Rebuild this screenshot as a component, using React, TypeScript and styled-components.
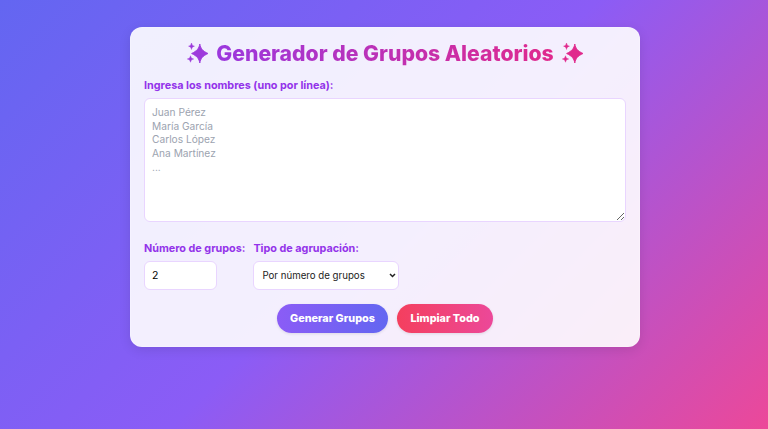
import styled, { createGlobalStyle } from "styled-components";

const GlobalStyle = createGlobalStyle`
    html, body {
        margin: 0;
        padding: 0;
    }

    body {
        font-family: "Inter", "Liberation Sans", sans-serif;
    }

    * {
        box-sizing: border-box;
    }
`;

const Sparkle = (props: { color: string }) => (
    <SparkleIcon viewBox="0 0 21 20" fill={props.color}>
        <path d="M12.8 1 C13.6 5.4 15.6 8 21 10.5 C15.6 13 13.6 15.6 12.8 20 C12 15.6 10 13 4.6 10.5 C10 8 12 5.4 12.8 1 Z" stroke={props.color} strokeWidth="0.9" strokeLinejoin="round" />
        <path d="M4.5 0 C4.9 2 5.5 2.7 7.4 3.2 C5.5 3.7 4.9 4.4 4.5 6.4 C4.1 4.4 3.5 3.7 1.6 3.2 C3.5 2.7 4.1 2 4.5 0 Z" stroke={props.color} strokeWidth="0.5" strokeLinejoin="round" />
        <path d="M3.5 12.8 C3.9 14.8 4.5 15.5 6.6 16 C4.5 16.5 3.9 17.2 3.5 19.2 C3.1 17.2 2.5 16.5 0.4 16 C2.5 15.5 3.1 14.8 3.5 12.8 Z" stroke={props.color} strokeWidth="0.5" strokeLinejoin="round" />
    </SparkleIcon>
);

export default function App() {
    return <Page>
        <GlobalStyle />
        <Card>
            <TitleRow>
                <Sparkle color="#9d3bdc" />
                <Title>Generador de Grupos Aleatorios</Title>
                <Sparkle color="#e0298c" />
            </TitleRow>
            <Field>
                <Label>Ingresa los nombres (uno por línea):</Label>
                <NamesArea placeholder={"Juan Pérez\nMaría García\nCarlos López\nAna Martínez\n..."} />
            </Field>
            <OptionsRow>
                <Field>
                    <Label>Número de grupos:</Label>
                    <NumberInput type="number" defaultValue={2} />
                </Field>
                <Field>
                    <Label>Tipo de agrupación:</Label>
                    <TypeSelect defaultValue="groups">
                        <option value="groups">Por número de grupos</option>
                        <option value="size">Por tamaño de grupo</option>
                    </TypeSelect>
                </Field>
            </OptionsRow>
            <ButtonsRow>
                <ActionButton $from="#8b5cf6" $to="#6366f1" $width={111}>Generar Grupos</ActionButton>
                <ActionButton $from="#f43f5e" $to="#ec4899" $width={96}>Limpiar Todo</ActionButton>
            </ButtonsRow>
        </Card>
    </Page>;
}

const Page = styled.div`
    width: 100%;
    height: 429px;
    overflow: hidden;

    display: flex;
    justify-content: center;
    align-items: flex-start;

    padding: 27px 0 0 2px;

    background: linear-gradient(135deg, #6366f1 0%, #8b5cf6 50%, #ec4899 100%);
`;

const Card = styled.div`
    width: 510px;
    height: 320px;

    display: flex;
    flex-direction: column;

    padding: 12px 13px 13px;

    border: 1px solid rgba(255, 255, 255, 0.2);
    border-radius: 12px;

    background: rgba(255, 255, 255, 0.9);
    box-shadow: 0 3px 12px rgba(0, 0, 0, 0.1);
`;

const TitleRow = styled.div`
    height: 25px;

    display: flex;
    justify-content: center;
    align-items: center;
    gap: 8px;

    margin-bottom: 14px;
`;

const SparkleIcon = styled.svg`
    width: 21px;
    height: 20px;
    flex-shrink: 0;
`;

const Title = styled.h1`
    margin: 0;

    font-size: 21.2px;
    font-weight: 800;
    white-space: nowrap;

    color: transparent;
    background: linear-gradient(90deg, #9b38de 0%, #e0298c 100%);
    background-clip: text;
    -webkit-background-clip: text;
`;

const Field = styled.div`
    display: flex;
    flex-direction: column;
`;

const Label = styled.label`
    height: 14px;
    margin-bottom: 5px;

    font-size: 10.8px;
    line-height: 14px;
    font-weight: 700;
    white-space: nowrap;

    color: #9333ea;
`;

const NamesArea = styled.textarea`
    width: 482px;
    height: 124px;

    padding: 7px;

    border: 1px solid #e9d5ff;
    border-radius: 6px;

    font-family: "Inter", "Liberation Sans", sans-serif;
    font-size: 10.2px;
    line-height: 13.7px;

    background: #ffffff;

    &::placeholder {
        color: #9ca3af;
        opacity: 1;
    }
`;

const OptionsRow = styled.div`
    display: flex;
    gap: 8px;

    margin-top: 20px;
`;

const NumberInput = styled.input`
    width: 73px;
    height: 29px;

    padding: 0 7px;

    border: 1px solid #e9d5ff;
    border-radius: 6px;

    font-family: "Inter", "Liberation Sans", sans-serif;
    font-size: 10.5px;

    background: #ffffff;
`;

const TypeSelect = styled.select`
    width: 146px;
    height: 29px;

    appearance: none;
    padding: 0 8px;

    border: 1px solid #e9d5ff;
    border-radius: 6px;

    font-family: "Inter", "Liberation Sans", sans-serif;
    font-size: 9.7px;

    color: #222222;
    background-color: #ffffff;
    background-image: url("data:image/svg+xml,%3Csvg xmlns='http://www.w3.org/2000/svg' width='7' height='5' viewBox='0 0 7 5'%3E%3Cpath d='M1 1l2.5 2.5L6 1' fill='none' stroke='%23222' stroke-width='1.5'/%3E%3C/svg%3E");
    background-repeat: no-repeat;
    background-position: right 1px center;
    background-position-x: calc(100% - 2px);
`;

const ButtonsRow = styled.div`
    display: flex;
    justify-content: center;
    gap: 9px;

    margin-top: 14px;
`;

const ActionButton = styled.button<{ $from: string; $to: string; $width: number }>`
    width: ${props => props.$width}px;
    height: 29px;

    padding: 0;

    border: none;
    border-radius: 15px;

    font-family: "Inter", "Liberation Sans", sans-serif;
    font-size: 10.8px;
    font-weight: 800;
    white-space: nowrap;

    color: #ffffff;
    background: linear-gradient(90deg, ${props => props.$from}, ${props => props.$to});
    box-shadow: 0 1px 3px rgba(0, 0, 0, 0.1);
`;
